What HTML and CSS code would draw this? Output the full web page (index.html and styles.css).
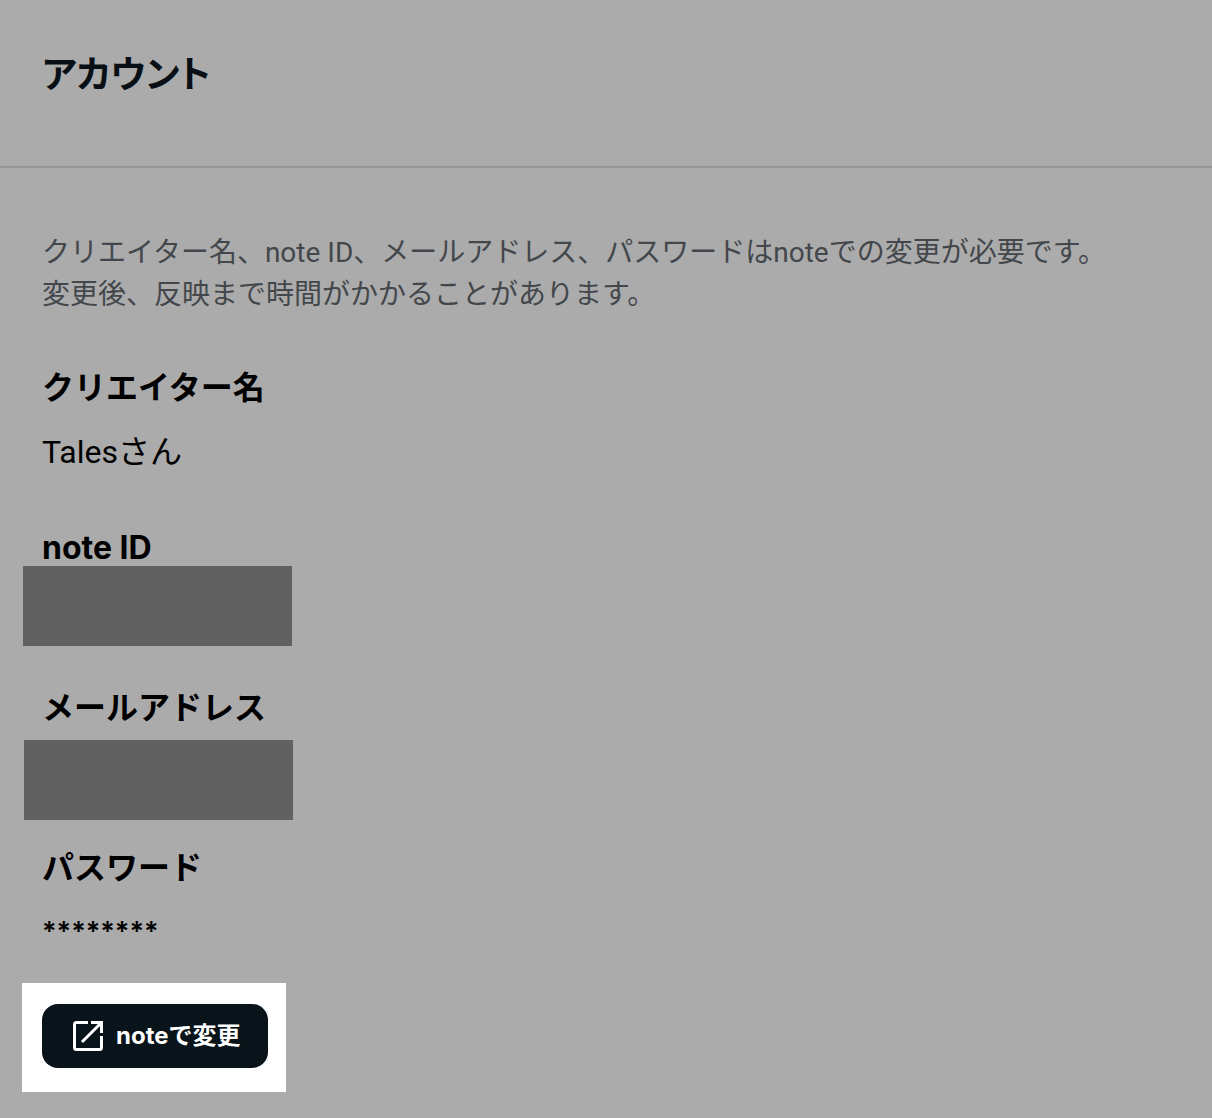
FILE: index.html
```html
<!DOCTYPE html>
<html lang="ja">
<head>
  <meta charset="UTF-8">
  <meta name="viewport" content="width=device-width, initial-scale=1">
  <title>アカウント</title>
  <link rel="stylesheet" href="styles.css">
</head>
<body>
  <header class="page-header">
    <h1>アカウント</h1>
  </header>

  <main class="account">
    <p class="description">
      クリエイター名、note ID、メールアドレス、パスワードはnoteでの変更が必要です。<br>
      変更後、反映まで時間がかかることがあります。
    </p>

    <dl class="fields">
      <div class="field">
        <dt>クリエイター名</dt>
        <dd>Talesさん</dd>
      </div>
      <div class="field">
        <dt>note ID</dt>
        <dd><span class="mask mask-id"></span></dd>
      </div>
      <div class="field">
        <dt>メールアドレス</dt>
        <dd><span class="mask mask-mail"></span></dd>
      </div>
      <div class="field">
        <dt>パスワード</dt>
        <dd class="password">********</dd>
      </div>
    </dl>

    <div class="highlight">
      <button type="button" class="change-button">
        <svg class="icon" viewBox="0 0 32 32" aria-hidden="true">
          <path d="M16 2.500H4.500Q2.500 2.500 2.500 4.500V27.500Q2.500 29.500 4.500 29.500H27.500Q29.500 29.500 29.500 27.500V16" />
          <path d="M19 2.500H29.500V13M29 3L10 22" />
        </svg>
        noteで変更
      </button>
    </div>
  </main>
</body>
</html>
```

FILE: styles.css
```css
* {
  box-sizing: border-box;
}

body {
  margin: 0;
  background-color: #ababab;
  color: #000;
  font-family: Inter, "Noto Sans CJK JP", sans-serif;
  font-size: 32px;
  line-height: 48px;
}

.page-header {
  padding: 48px 42px 64px;
  border-bottom: 2px solid #979797;
}

h1 {
  margin: 0;
  color: #080f15;
  font-size: 37px;
  line-height: 54px;
  font-feature-settings: "palt";
}

.account {
  padding: 64px 42px 26px;
}

.description {
  margin: 0 0 48px;
  color: #43474b;
  font-family: Roboto, "Noto Sans CJK JP", sans-serif;
  font-size: 28px;
  line-height: 42px;
}

.fields {
  display: grid;
  gap: 48px;
  margin: 0 0 27px;
}

.field {
  display: grid;
  gap: 16px;
}

dt {
  font-weight: 700;
}

dd {
  position: relative;
  height: 48px;
  margin: 0;
  font-family: Roboto, "Noto Sans CJK JP", sans-serif;
}

.password {
  font-family: Inter, sans-serif;
  font-size: 27px;
  font-weight: 600;
}

/* covers the private values */
.mask {
  position: absolute;
  width: 269px;
  height: 80px;
  background-color: #616161;
}

.mask-id {
  top: -22px;
  left: -19px;
}

.mask-mail {
  top: -8px;
  left: -18px;
}

.highlight {
  width: fit-content;
  margin-left: -20px;
  padding: 21px 18px 24px 20px;
  background-color: #fff;
}

.change-button {
  display: flex;
  align-items: center;
  gap: 12px;
  height: 64px;
  padding: 0 27px 0 30px;
  border: none;
  border-radius: 16px;
  background-color: #08131a;
  color: #fff;
  font-family: inherit;
  font-size: 24px;
  font-weight: 700;
  line-height: 1;
  cursor: pointer;
}

.icon {
  width: 32px;
  height: 32px;
  fill: none;
  stroke: #fff;
  stroke-width: 3;
}
```
